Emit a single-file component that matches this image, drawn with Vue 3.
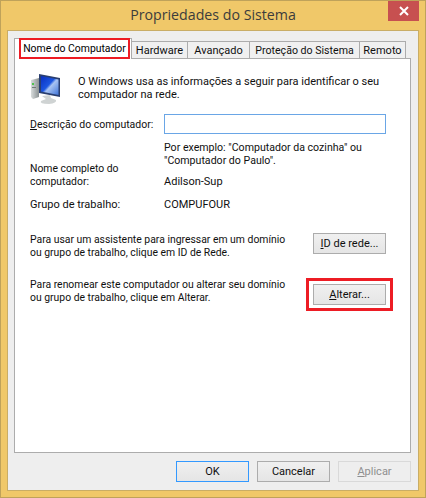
<script setup>
const tabs = [
  { label: 'Nome do Computador', active: true },
  { label: 'Hardware' },
  { label: 'Avançado' },
  { label: 'Proteção do Sistema' },
  { label: 'Remoto' },
]
</script>

<template>
  <div class="window">
    <header class="titlebar">
      <span class="title">Propriedades do Sistema</span>
      <button class="close" aria-label="Fechar">
        <svg width="10" height="10" viewBox="0 0 10 10"><path d="M1 1L9 9M9 1L1 9" stroke="#fff" stroke-width="2" /></svg>
      </button>
    </header>
    <div class="client">
      <nav class="tabs">
        <div v-for="t in tabs" :key="t.label" class="tab" :class="{ active: t.active }">
          <span :class="{ marked: t.active }">{{ t.label }}</span>
        </div>
      </nav>
      <section class="panel">
        <div class="intro">
          <svg class="pc" width="32" height="33" viewBox="0 0 32 33">
            <defs>
              <linearGradient id="scr" x1="0" y1="0" x2="1" y2="1">
                <stop offset="0" stop-color="#0a2fc0" />
                <stop offset="0.45" stop-color="#1c56e0" />
                <stop offset="0.55" stop-color="#a9c4f2" />
                <stop offset="1" stop-color="#3f74d8" />
              </linearGradient>
              <linearGradient id="tower" x1="0" y1="0" x2="1" y2="0">
                <stop offset="0" stop-color="#d8dcdc" />
                <stop offset="1" stop-color="#8b9294" />
              </linearGradient>
            </defs>
            <path d="M1 7L9 5V24L3 26L1 24Z" fill="url(#tower)" />
            <rect x="2" y="10" width="2" height="2" fill="#4fc34f" />
            <rect x="2" y="14" width="4" height="1" fill="#70787a" />
            <path d="M9 1L30 5V24L9 20Z" fill="#2a3f70" />
            <path d="M11 3L28.500 6.500V22L11 18.500Z" fill="url(#scr)" />
            <path d="M12 23L20 22L21 25L26 27Q27 30 19 31Q9 31 11 28L16 26Z" fill="#cfd3d3" />
          </svg>
          <p class="intro-text">O Windows usa as informações a seguir para identificar o seu<br>computador na rede.</p>
        </div>

        <div class="field desc">
          <label class="label"><u>D</u>escrição do computador:</label>
          <input class="input" type="text" />
        </div>
        <p class="example">Por exemplo: "Computador da cozinha" ou<br>"Computador do Paulo".</p>

        <div class="field full">
          <span class="label">Nome completo do<br>computador:</span>
          <span class="value">Adilson-Sup</span>
        </div>
        <div class="field group">
          <span class="label">Grupo de trabalho:</span>
          <span class="value">COMPUFOUR</span>
        </div>

        <div class="action first">
          <p>Para usar um assistente para ingressar em um domínio<br>ou grupo de trabalho, clique em ID de Rede.</p>
          <button class="btn"><u>I</u>D de rede...</button>
        </div>
        <div class="action second">
          <p>Para renomear este computador ou alterar seu domínio<br>ou grupo de trabalho, clique em Alterar.</p>
          <button class="btn marked-btn"><u>A</u>lterar...</button>
        </div>
      </section>
      <footer class="footer">
        <button class="btn default">OK</button>
        <button class="btn">Cancelar</button>
        <button class="btn disabled"><u>A</u>plicar</button>
      </footer>
    </div>
  </div>
</template>

<style>
html, body { margin: 0; padding: 0; }
</style>

<style scoped>
.window {
  width: 426px;
  height: 498px;
  box-sizing: border-box;
  border: 1px solid #bfa25a;
  background: #f0c869;
  padding: 0 6px 6px;
  display: flex;
  flex-direction: column;
  font-family: Roboto, "Liberation Sans", sans-serif;
  font-size: 11px;
  color: #101010;
  position: relative;
}
p { margin: 0; }
.titlebar {
  height: 29px;
  flex: none;
  display: flex;
  align-items: center;
  justify-content: center;
}
.title {
  font-family: "Open Sans", sans-serif;
  font-size: 14.2px;
  color: #3c3c3c;
  margin-top: -2px;
}
.close {
  position: absolute;
  top: 0;
  right: 6px;
  width: 31px;
  height: 20px;
  border: 0;
  padding: 0;
  background: #c75050;
  display: flex;
  align-items: center;
  justify-content: center;
}
.client {
  flex: 1;
  min-height: 0;
  border: 1px solid #c9ad66;
  background: #eeeeee;
  padding: 7px 7px 0 6px;
  display: flex;
  flex-direction: column;
}
.tabs {
  display: flex;
  height: 20px;
  flex: none;
  align-items: flex-end;
  position: relative;
  z-index: 1;
}
.tab {
  box-sizing: border-box;
  height: 17px;
  border: 1px solid #acacac;
  border-bottom: 0;
  border-left: 0;
  background: #f0f0f0;
  justify-content: center;
  display: flex;
  align-items: center;
  white-space: nowrap;
}
.tab:nth-child(2) { width: 56px; }
.tab:nth-child(3) { width: 62px; }
.tab:nth-child(4) { width: 110px; font-size: 10.6px; }
.tab:nth-child(5) { width: 46px; }
.tab.active {
  width: 118px;
  height: 21px;
  background: #fff;
  border-left: 1px solid #acacac;
  margin-bottom: -1px;
  padding: 0 0 0 4px;
  justify-content: flex-start;
  align-items: flex-start;
  color: #000;
}
.marked {
  box-sizing: border-box;
  display: block;
  width: 111px;
  height: 21px;
  margin-top: -1px;
  border: 2px solid #ed1c24;
  text-align: center;
  font-size: 10.4px;
  line-height: 17px;
  background: #fff;
}
.panel {
  box-sizing: border-box;
  width: 397px;
  height: 395px;
  flex: none;
  border: 1px solid #acacac;
  background: #fff;
  padding: 13px 24px 0 15px;
  line-height: 13px;
}
.intro {
  display: flex;
  gap: 16px;
  height: 42px;
}
.pc { flex: none; margin-top: 1px; }
.intro-text {
  margin-top: 3px;
  white-space: nowrap;
}
.field {
  display: flex;
  align-items: center;
}
.label {
  width: 134px;
  flex: none;
  white-space: nowrap;
}
.desc { height: 20px; }
.desc .label { font-size: 10.5px; }
.input {
  box-sizing: border-box;
  width: 222px;
  height: 20px;
  border: 1px solid #6aa6e6;
  background: #fff;
  padding: 0;
  outline: none;
}
.example { margin: 7px 0 0 134px; font-size: 10.6px; }
.full { margin-top: -5px; align-items: flex-end; }
.full .label { font-size: 10.4px; }
.group { margin-top: 10px; }
.action {
  display: flex;
  justify-content: space-between;
  align-items: flex-start;
  white-space: nowrap;
}
.action p { font-size: 10.4px; }
.first { margin-top: 22px; }
.second { margin-top: 19px; }
.second .btn { margin-top: 6px; }
.btn {
  box-sizing: border-box;
  width: 73px;
  height: 21px;
  border: 1px solid #acacac;
  background: linear-gradient(#f0f0f0, #e5e5e5);
  font: inherit;
  color: #101010;
  padding: 0;
  flex: none;
  position: relative;
}
.marked-btn::after {
  content: "";
  position: absolute;
  inset: -7px -8px;
  border: 3px solid #ed1c24;
}
.footer {
  display: flex;
  justify-content: flex-end;
  gap: 8px;
  margin-top: 8px;
  width: 397px;
}
.default { border-color: #3399ff; }
.disabled {
  color: #8f8f8f;
  background: #eeeeee;
  border-color: #d9d9d9;
}
</style>
